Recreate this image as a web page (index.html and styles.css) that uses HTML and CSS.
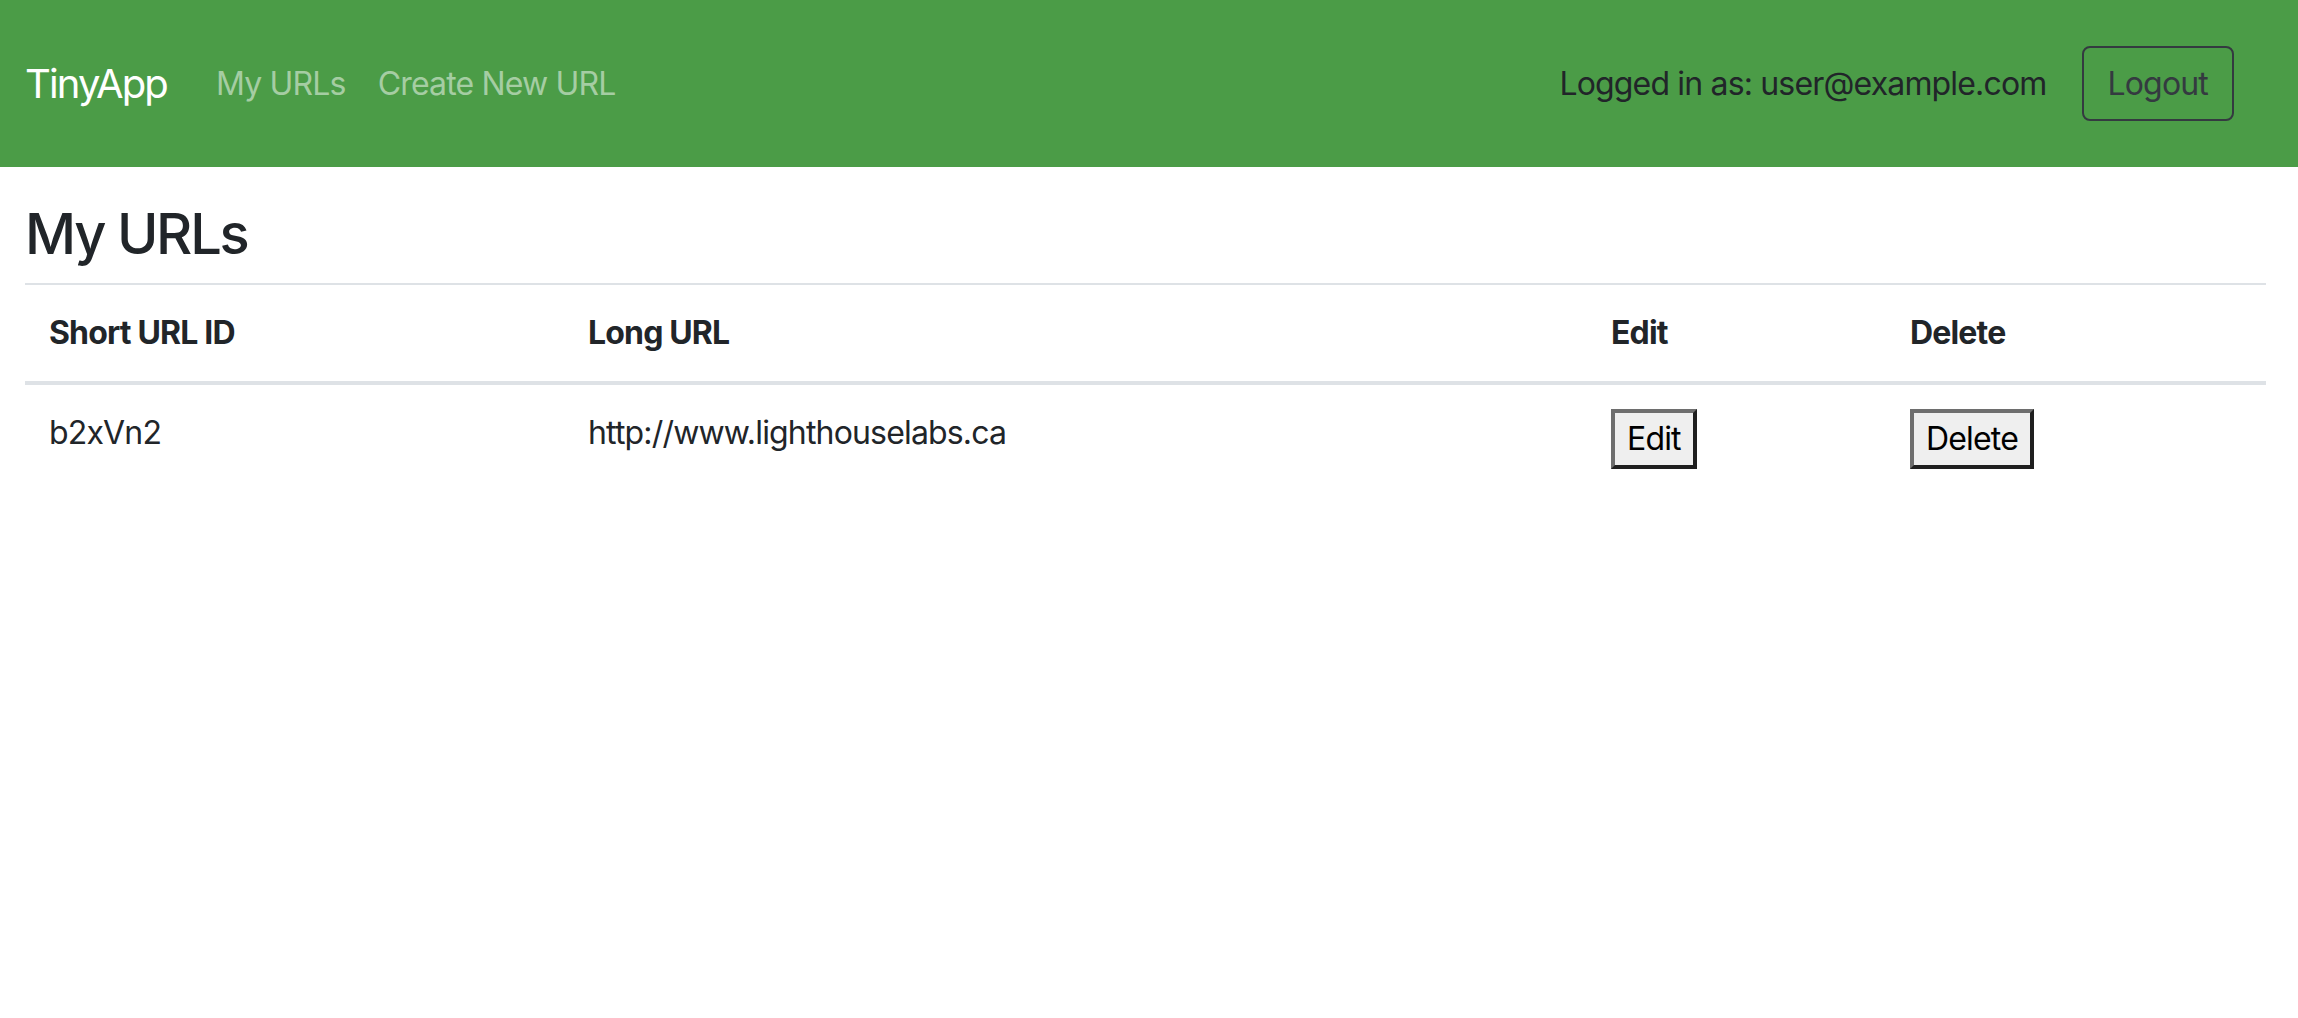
FILE: index.html
```html
<!DOCTYPE html>
<html lang="en">
<head>
<meta charset="utf-8">
<title>TinyApp</title>
<link rel="stylesheet" href="styles.css">
</head>
<body>
<nav class="navbar">
  <a class="brand" href="#">TinyApp</a>
  <div class="nav-links">
    <a class="nav-link" href="#">My URLs</a>
    <a class="nav-link" href="#">Create New URL</a>
  </div>
  <div class="nav-right">
    <span class="nav-text">Logged in as: user@example.com</span>
    <button class="btn-logout" type="button">Logout</button>
  </div>
</nav>
<main class="main">
  <h3 class="title">My URLs</h3>
  <table class="table">
    <thead>
      <tr>
        <th class="col-id">Short URL ID</th>
        <th class="col-long">Long URL</th>
        <th class="col-edit">Edit</th>
        <th class="col-del">Delete</th>
      </tr>
    </thead>
    <tbody>
      <tr>
        <td>b2xVn2</td>
        <td>http://www.lighthouselabs.ca</td>
        <td><button class="btn-plain" type="button">Edit</button></td>
        <td><button class="btn-plain" type="button">Delete</button></td>
      </tr>
    </tbody>
  </table>
</main>
</body>
</html>
```

FILE: styles.css
```css
* { box-sizing: border-box; }

html, body {
  margin: 0;
  padding: 0;
  background: #ffffff;
}

body {
  font-family: Inter, "Liberation Sans", sans-serif;
  font-size: 32px;
  line-height: 48px;
  letter-spacing: -0.026em;
  color: #212529;
}

.navbar {
  display: flex;
  align-items: center;
  height: 167px;
  padding: 0 64px 0 25px;
  background: #4b9c47;
}

.brand {
  font-size: 40px;
  line-height: 60px;
  letter-spacing: -0.046em;
  color: #ffffff;
  text-decoration: none;
  margin-right: 33px;
}

.nav-links {
  display: flex;
}

.nav-link {
  padding: 0 16px;
  color: #a5cda3;
  text-decoration: none;
}

.nav-right {
  margin-left: auto;
  display: flex;
  align-items: center;
}

.nav-text {
  margin-right: 35px;
  color: #212529;
}

.btn-logout {
  font-family: inherit;
  font-size: 32px;
  line-height: 48px;
  letter-spacing: -0.026em;
  height: 75px;
  padding: 0 24px;
  background: transparent;
  color: #343a40;
  border: 2px solid #343a40;
  border-radius: 8px;
}

.main {
  padding: 34px 32px 0 25px;
}

.title {
  margin: 0 0 15px 0;
  font-size: 56px;
  line-height: 67px;
  font-weight: 500;
  letter-spacing: -0.04em;
}

.table {
  width: 100%;
  border-collapse: separate;
  border-spacing: 0;
}

.table th {
  text-align: left;
  font-weight: 700;
  padding: 24px;
  border-top: 2px solid #dee2e6;
  border-bottom: 4px solid #dee2e6;
  vertical-align: bottom;
}

.table td {
  padding: 24px;
  vertical-align: top;
}

.col-id { width: 539px; }
.col-long { width: 1023px; }
.col-edit { width: 299px; }
.col-del { width: 380px; }

.btn-plain {
  font-family: inherit;
  font-size: 32px;
  line-height: 48px;
  letter-spacing: -0.026em;
  padding: 2px 12px;
  background: #efefef;
  color: #000000;
  border: 4px solid;
  border-color: #6e6e6e #1f1f1f #1f1f1f #6e6e6e;
  border-radius: 0;
}
```
